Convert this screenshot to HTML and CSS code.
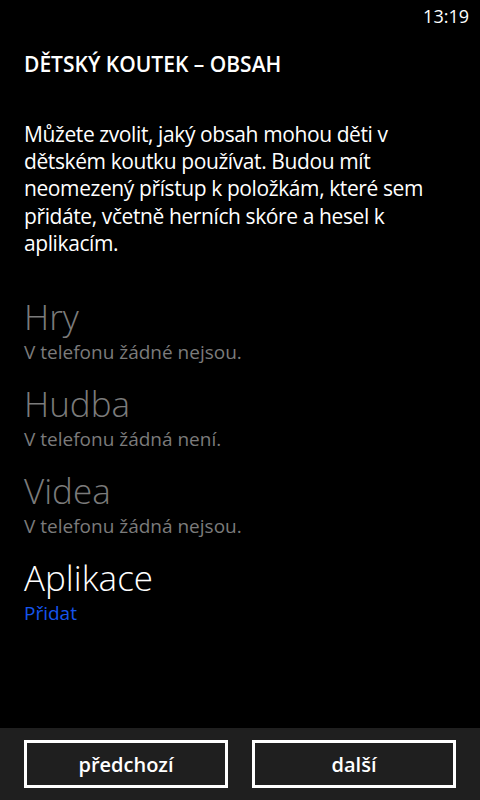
FILE: index.html
```html
<!DOCTYPE html>
<html lang="cs">
<head>
  <meta charset="UTF-8" />
  <meta name="viewport" content="width=device-width, initial-scale=1.0"/>
  <title>Dětský koutek – obsah</title>
  <link rel="stylesheet" href="styles.css">
</head>
<body>
  <div class="status-bar">
    <span class="clock">13:19</span>
  </div>

  <div class="page">
    <h1 class="page-title">DĚTSKÝ KOUTEK – OBSAH</h1>

    <p class="intro">Můžete zvolit, jaký obsah mohou děti v dětském koutku používat. Budou mít neomezený přístup k položkám, které sem přidáte, včetně herních skóre a hesel k aplikacím.</p>

    <ul class="content-list">
      <li class="content-item disabled">
        <div class="item-name">Hry</div>
        <div class="item-info">V telefonu žádné nejsou.</div>
      </li>
      <li class="content-item disabled">
        <div class="item-name">Hudba</div>
        <div class="item-info">V telefonu žádná není.</div>
      </li>
      <li class="content-item disabled">
        <div class="item-name">Videa</div>
        <div class="item-info">V telefonu žádná nejsou.</div>
      </li>
      <li class="content-item">
        <div class="item-name">Aplikace</div>
        <a class="item-link" href="#">Přidat</a>
      </li>
    </ul>
  </div>

  <div class="app-bar">
    <button class="bar-button">předchozí</button>
    <button class="bar-button">další</button>
  </div>
</body>
</html>
```

FILE: styles.css
```css
html, body {
  margin: 0;
  height: 100%;
}

body {
  font-family: "Open Sans", "Noto Sans", sans-serif;
  background-color: #000;
  color: #fff;
  display: flex;
  flex-direction: column;
}

.status-bar {
  height: 32px;
  display: flex;
  justify-content: flex-end;
  align-items: center;
  padding-right: 11px;
}

.clock {
  font-size: 18px;
  line-height: 32px;
}

.page {
  flex: 1;
  padding: 0 24px;
}

.page-title {
  margin: 18px 0 0;
  font-size: 21px;
  font-weight: 600;
  line-height: 28px;
}

.intro {
  margin: 43px 0 0;
  font-size: 21px;
  line-height: 27.2px;
  letter-spacing: -0.4px;
}

.content-list {
  list-style: none;
  margin: 40px 0 0;
  padding: 0;
}

.content-item {
  margin-bottom: 20px;
}

.item-name {
  font-size: 35px;
  font-weight: 300;
  line-height: 40px;
}

.item-info,
.item-link {
  display: block;
  font-size: 19px;
  line-height: 24px;
  margin-top: 3px;
}

.disabled {
  color: #7b7b7b;
}

.item-link {
  color: #1655ee;
  text-decoration: none;
}

.app-bar {
  height: 72px;
  background-color: #1f1f1f;
  display: flex;
  gap: 24px;
  padding: 12px 24px;
  box-sizing: border-box;
}

.bar-button {
  flex: 1;
  height: 48px;
  background: transparent;
  border: 3px solid #fff;
  color: #fff;
  font-family: inherit;
  font-size: 20px;
  font-weight: 600;
  padding: 0;
}
```
